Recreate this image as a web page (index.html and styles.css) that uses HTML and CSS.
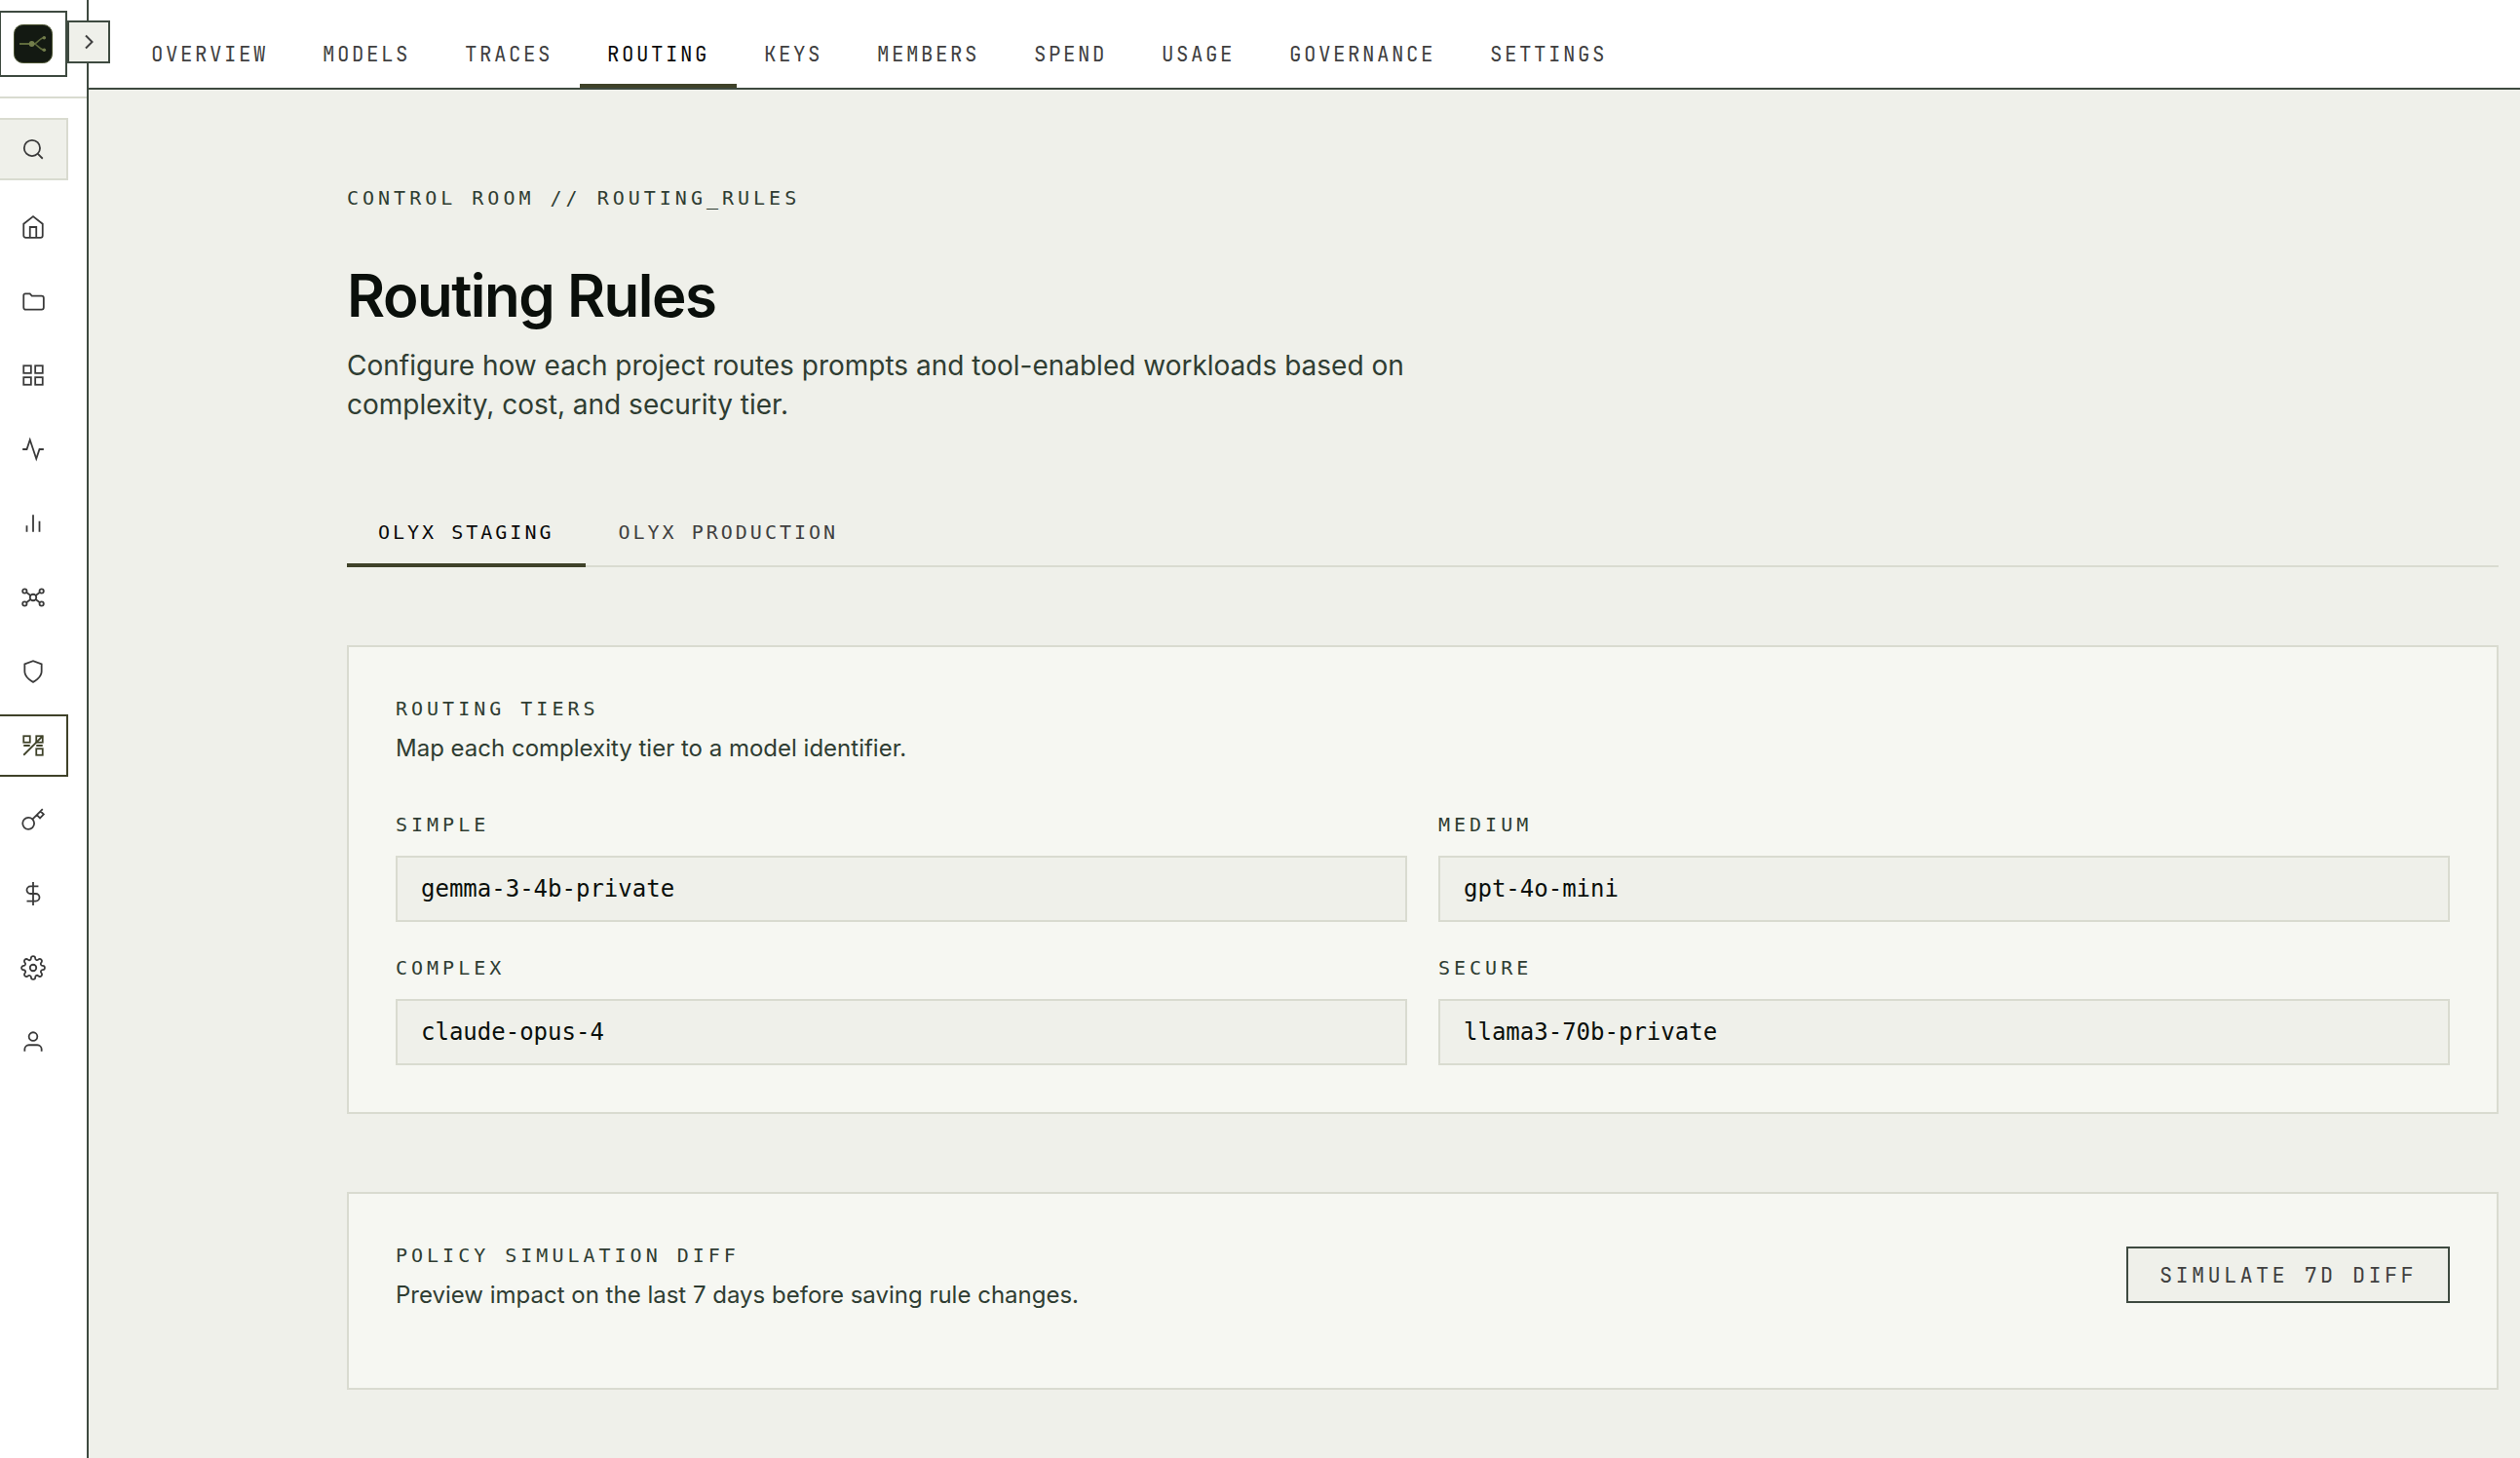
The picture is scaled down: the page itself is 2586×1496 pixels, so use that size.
FILE: index.html
```html
<!DOCTYPE html>
<html lang="en">
<head>
    <meta charset="UTF-8">
    <meta name="viewport" content="width=device-width, initial-scale=1.0">
    <title>Routing Rules</title>
    <link rel="stylesheet" href="styles.css">
</head>
<body>
    <aside class="sidebar">
        <div class="brand">
            <a href="#" class="logo">
                <svg width="40" height="40" viewBox="0 0 40 40">
                    <rect x="0.5" y="0.5" width="39" height="39" rx="9" fill="#131912" stroke="#4a5230"/>
                    <g fill="none" stroke="#5f6a3c" stroke-width="1.6">
                        <path d="M6 20h16" stroke-width="2"/>
                        <path d="M21 20c3 0 5.500-6 10-6.200M21 20c3 0 5.500 6 10 6.200"/>
                    </g>
                    <g fill="#727d4b">
                        <circle cx="18.600" cy="20" r="2.900"/>
                        <circle cx="31.300" cy="13.800" r="1.800"/>
                        <circle cx="31.300" cy="26.300" r="1.800"/>
                    </g>
                </svg>
            </a>
            <button class="toggle" aria-label="Expand sidebar">
                <svg width="24" height="24" viewBox="0 0 24 24"><path d="M9 5.500l6.500 6.500L9 18.500"/></svg>
            </button>
        </div>
        <button class="side-item search" aria-label="Search">
            <svg class="icon" viewBox="0 0 24 24"><circle cx="11" cy="11" r="7.500"/><path d="M16.500 16.500L21 21"/></svg>
        </button>
        <nav class="side-nav">
            <a href="#" class="side-item">
                <svg class="icon" viewBox="0 0 24 24"><path d="M3 9l9-7 9 7v11a2 2 0 0 1-2 2H5a2 2 0 0 1-2-2z"/><path d="M9 22V12h6v10"/></svg>
            </a>
            <a href="#" class="side-item">
                <svg class="icon" viewBox="0 0 24 24"><path d="M3 6.500A1.500 1.500 0 0 1 4.500 5H9l1.800 2H20a2 2 0 0 1 2 2v9a2 2 0 0 1-2 2H5a2 2 0 0 1-2-2z"/></svg>
            </a>
            <a href="#" class="side-item">
                <svg class="icon" viewBox="0 0 24 24"><rect x="3" y="3" width="7" height="7"/><rect x="14" y="3" width="7" height="7"/><rect x="14" y="14" width="7" height="7"/><rect x="3" y="14" width="7" height="7"/></svg>
            </a>
            <a href="#" class="side-item">
                <svg class="icon" viewBox="0 0 24 24"><path d="M22 12h-4l-3 9L9 3l-3 9H2"/></svg>
            </a>
            <a href="#" class="side-item">
                <svg class="icon" viewBox="0 0 24 24"><path d="M18 20V10M12 20V4M6 20v-6"/></svg>
            </a>
            <a href="#" class="side-item">
                <svg class="icon" viewBox="0 0 24 24"><circle cx="12" cy="12" r="3"/><circle cx="4" cy="6" r="2"/><circle cx="20" cy="6" r="2"/><circle cx="4" cy="18" r="2"/><circle cx="20" cy="18" r="2"/><path d="M5.600 7.200L9.600 10.200M18.400 7.200l-4 3M5.600 16.800l4-3M18.400 16.800l-4-3"/></svg>
            </a>
            <a href="#" class="side-item">
                <svg class="icon" viewBox="0 0 24 24"><path d="M12 22s8-4 8-10V5l-8-3-8 3v7c0 6 8 10 8 10z"/></svg>
            </a>
            <a href="#" class="side-item active">
                <svg class="icon" viewBox="0 0 24 24"><rect x="3" y="3" width="6" height="6"/><rect x="15" y="3" width="6" height="6"/><rect x="15" y="15" width="6" height="6"/><path d="M3 12h6M15 12h6M3 21L21 3"/></svg>
            </a>
            <a href="#" class="side-item">
                <svg class="icon" viewBox="0 0 24 24"><path d="M21 2l-2 2m-7.610 7.610a5.500 5.500 0 1 1-7.778 7.778 5.500 5.500 0 0 1 7.777-7.777zm0 0L15.500 7.500m0 0l3 3L22 7l-3-3m-3.500 3.500L19 4"/></svg>
            </a>
            <a href="#" class="side-item">
                <svg class="icon" viewBox="0 0 24 24"><path d="M12 1v22"/><path d="M17 5H9.500a3.500 3.500 0 0 0 0 7h5a3.500 3.500 0 0 1 0 7H6"/></svg>
            </a>
            <a href="#" class="side-item">
                <svg class="icon" viewBox="0 0 24 24"><circle cx="12" cy="12" r="3"/><path d="M19.400 15a1.650 1.650 0 0 0 .33 1.820l.06.06a2 2 0 0 1 0 2.830 2 2 0 0 1-2.830 0l-.06-.06a1.650 1.650 0 0 0-1.820-.33 1.650 1.650 0 0 0-1 1.510V21a2 2 0 0 1-2 2 2 2 0 0 1-2-2v-.09A1.650 1.650 0 0 0 9 19.400a1.650 1.650 0 0 0-1.820.33l-.06.06a2 2 0 0 1-2.830 0 2 2 0 0 1 0-2.830l.06-.06a1.650 1.650 0 0 0 .33-1.820 1.650 1.650 0 0 0-1.510-1H3a2 2 0 0 1-2-2 2 2 0 0 1 2-2h.09A1.650 1.650 0 0 0 4.600 9a1.650 1.650 0 0 0-.33-1.820l-.06-.06a2 2 0 0 1 0-2.830 2 2 0 0 1 2.830 0l.06.06a1.650 1.650 0 0 0 1.820.33H9a1.650 1.650 0 0 0 1-1.510V3a2 2 0 0 1 2-2 2 2 0 0 1 2 2v.09a1.650 1.650 0 0 0 1 1.510 1.650 1.650 0 0 0 1.820-.33l.06-.06a2 2 0 0 1 2.830 0 2 2 0 0 1 0 2.830l-.06.06a1.650 1.650 0 0 0-.33 1.820V9a1.650 1.650 0 0 0 1.510 1H21a2 2 0 0 1 2 2 2 2 0 0 1-2 2h-.09a1.650 1.650 0 0 0-1.510 1z"/></svg>
            </a>
            <a href="#" class="side-item">
                <svg class="icon" viewBox="0 0 24 24"><path d="M20 21v-2a4 4 0 0 0-4-4H8a4 4 0 0 0-4 4v2"/><circle cx="12" cy="7" r="4"/></svg>
            </a>
        </nav>
    </aside>

    <div class="page">
        <header class="topbar">
            <a href="#">Overview</a>
            <a href="#">Models</a>
            <a href="#">Traces</a>
            <a href="#" class="active">Routing</a>
            <a href="#">Keys</a>
            <a href="#">Members</a>
            <a href="#">Spend</a>
            <a href="#">Usage</a>
            <a href="#">Governance</a>
            <a href="#">Settings</a>
        </header>

        <main>
            <p class="label breadcrumb">Control Room // Routing_Rules</p>
            <h1>Routing Rules</h1>
            <p class="intro">Configure how each project routes prompts and tool-enabled workloads based on complexity, cost, and security tier.</p>

            <div class="tabs">
                <a href="#" class="tab active">Olyx Staging</a>
                <a href="#" class="tab">Olyx Production</a>
            </div>

            <section class="card">
                <h2 class="label">Routing Tiers</h2>
                <p class="hint">Map each complexity tier to a model identifier.</p>
                <form class="fields">
                    <div class="field">
                        <label class="label" for="simple">Simple</label>
                        <input type="text" id="simple" value="gemma-3-4b-private">
                    </div>
                    <div class="field">
                        <label class="label" for="medium">Medium</label>
                        <input type="text" id="medium" value="gpt-4o-mini">
                    </div>
                    <div class="field">
                        <label class="label" for="complex">Complex</label>
                        <input type="text" id="complex" value="claude-opus-4">
                    </div>
                    <div class="field">
                        <label class="label" for="secure">Secure</label>
                        <input type="text" id="secure" value="llama3-70b-private">
                    </div>
                </form>
            </section>

            <section class="card simulation">
                <div>
                    <h2 class="label">Policy Simulation Diff</h2>
                    <p class="hint">Preview impact on the last 7 days before saving rule changes.</p>
                </div>
                <button class="simulate-btn">Simulate 7D Diff</button>
            </section>
        </main>
    </div>
</body>
</html>
```

FILE: styles.css
```css
* {
    box-sizing: border-box;
}
body {
    margin: 0;
    display: flex;
    height: 1496px;
    overflow: hidden;
    font-family: Inter, sans-serif;
    background: #eff0ea;
    color: #2f3d32;
}
a {
    color: inherit;
    text-decoration: none;
}
h1, h2, p {
    margin: 0;
}
button {
    padding: 0;
    border-radius: 0;
    cursor: pointer;
}

/* sidebar */
.sidebar {
    flex: none;
    width: 91px;
    background: #fff;
    border-right: 2px solid #3e4a40;
    color: #404040;
}
.brand {
    display: flex;
    align-items: flex-start;
    height: 101px;
    padding-top: 11px;
    border-bottom: 2px solid #d9dbd0;
}
.logo {
    flex: none;
    display: flex;
    align-items: center;
    justify-content: center;
    width: 70px;
    height: 68px;
    margin-left: -1px;
    border: 2px solid #3e4a40;
}
.toggle {
    flex: none;
    display: flex;
    align-items: center;
    justify-content: center;
    width: 44px;
    height: 44px;
    margin-top: 10px;
    border: 2px solid #3e4a40;
    background: #eff0ea;
    z-index: 1;
}
.toggle svg {
    fill: none;
    stroke: #404040;
    stroke-width: 2;
}
.side-nav {
    display: flex;
    flex-direction: column;
    gap: 12px;
    margin-top: 16px;
}
.side-item {
    display: flex;
    align-items: center;
    justify-content: center;
    width: 72px;
    height: 64px;
    margin-left: -2px;
    border: 2px solid transparent;
    color: #3a3a3a;
}
.side-item.search {
    margin-top: 20px;
    background: #eff0ea;
    border-color: #d9dbd0;
}
.side-item.active {
    border-color: #3f4229;
    color: #3f4229;
}
.icon {
    width: 26px;
    height: 26px;
    fill: none;
    stroke: currentColor;
    stroke-width: 1.65;
}

/* top navigation */
.page {
    flex: 1;
    min-width: 0;
}
.topbar {
    display: flex;
    height: 92px;
    padding-left: 36px;
    background: #fff;
    border-bottom: 2px solid #3e4a40;
    font-family: "JetBrains Mono", "DejaVu Sans Mono", monospace;
    font-size: 20.8px;
    letter-spacing: 2.52px;
    text-transform: uppercase;
    color: #404040;
}
.topbar a {
    padding: 41px 28px 0;
    line-height: 30px;
    border-bottom: 4px solid transparent;
}
.topbar a.active {
    color: #0a0a0a;
    border-color: #3f4229;
}

/* content */
main {
    padding: 96px 22px 0 265px;
}
.label {
    font-family: "DejaVu Sans Mono", monospace;
    font-size: 20px;
    font-weight: 400;
    line-height: 30px;
    letter-spacing: 4px;
    text-transform: uppercase;
}
h1 {
    margin-top: 52px;
    font-size: 60px;
    font-weight: 600;
    line-height: 66px;
    letter-spacing: -1.5px;
    color: #0a0f0b;
}
.intro {
    max-width: 1120px;
    margin-top: 19px;
    font-size: 28px;
    line-height: 40px;
}
.tabs {
    display: flex;
    gap: 2px;
    margin: 80px 0;
    border-bottom: 2px solid #d9dbd0;
}
.tab {
    padding: 16px 32px 17px;
    margin-bottom: -2px;
    border-bottom: 4px solid transparent;
    font-family: "DejaVu Sans Mono", monospace;
    font-size: 20px;
    line-height: 30px;
    letter-spacing: 3px;
    text-transform: uppercase;
    color: #404040;
}
.tab.active {
    color: #0a0a0a;
    border-color: #3f4229;
}
.card {
    padding: 48px;
    background: #f6f7f2;
    border: 2px solid #d9dbd0;
}
.card + .card {
    margin-top: 80px;
}
.hint {
    margin-top: 11px;
    font-size: 24px;
    line-height: 30px;
}
.fields {
    display: grid;
    grid-template-columns: 1fr 1fr;
    gap: 32px;
    margin-top: 48px;
}
.field {
    display: flex;
    flex-direction: column;
    gap: 17px;
}
.field input {
    width: 100%;
    height: 68px;
    padding: 0 24px;
    border: 2px solid #d9dbd0;
    border-radius: 0;
    background: #eff0ea;
    font-family: "DejaVu Sans Mono", monospace;
    font-size: 24px;
    color: #0a0f0b;
}
.simulation {
    display: flex;
    justify-content: space-between;
    align-items: flex-start;
    height: 203px;
}
.simulate-btn {
    height: 58px;
    margin-top: 6px;
    padding: 0 32px;
    border: 2px solid #3e4a40;
    background: #eff0ea;
    font-family: "JetBrains Mono", "DejaVu Sans Mono", monospace;
    font-size: 22px;
    letter-spacing: 3.3px;
    text-transform: uppercase;
    color: #404040;
}
```
